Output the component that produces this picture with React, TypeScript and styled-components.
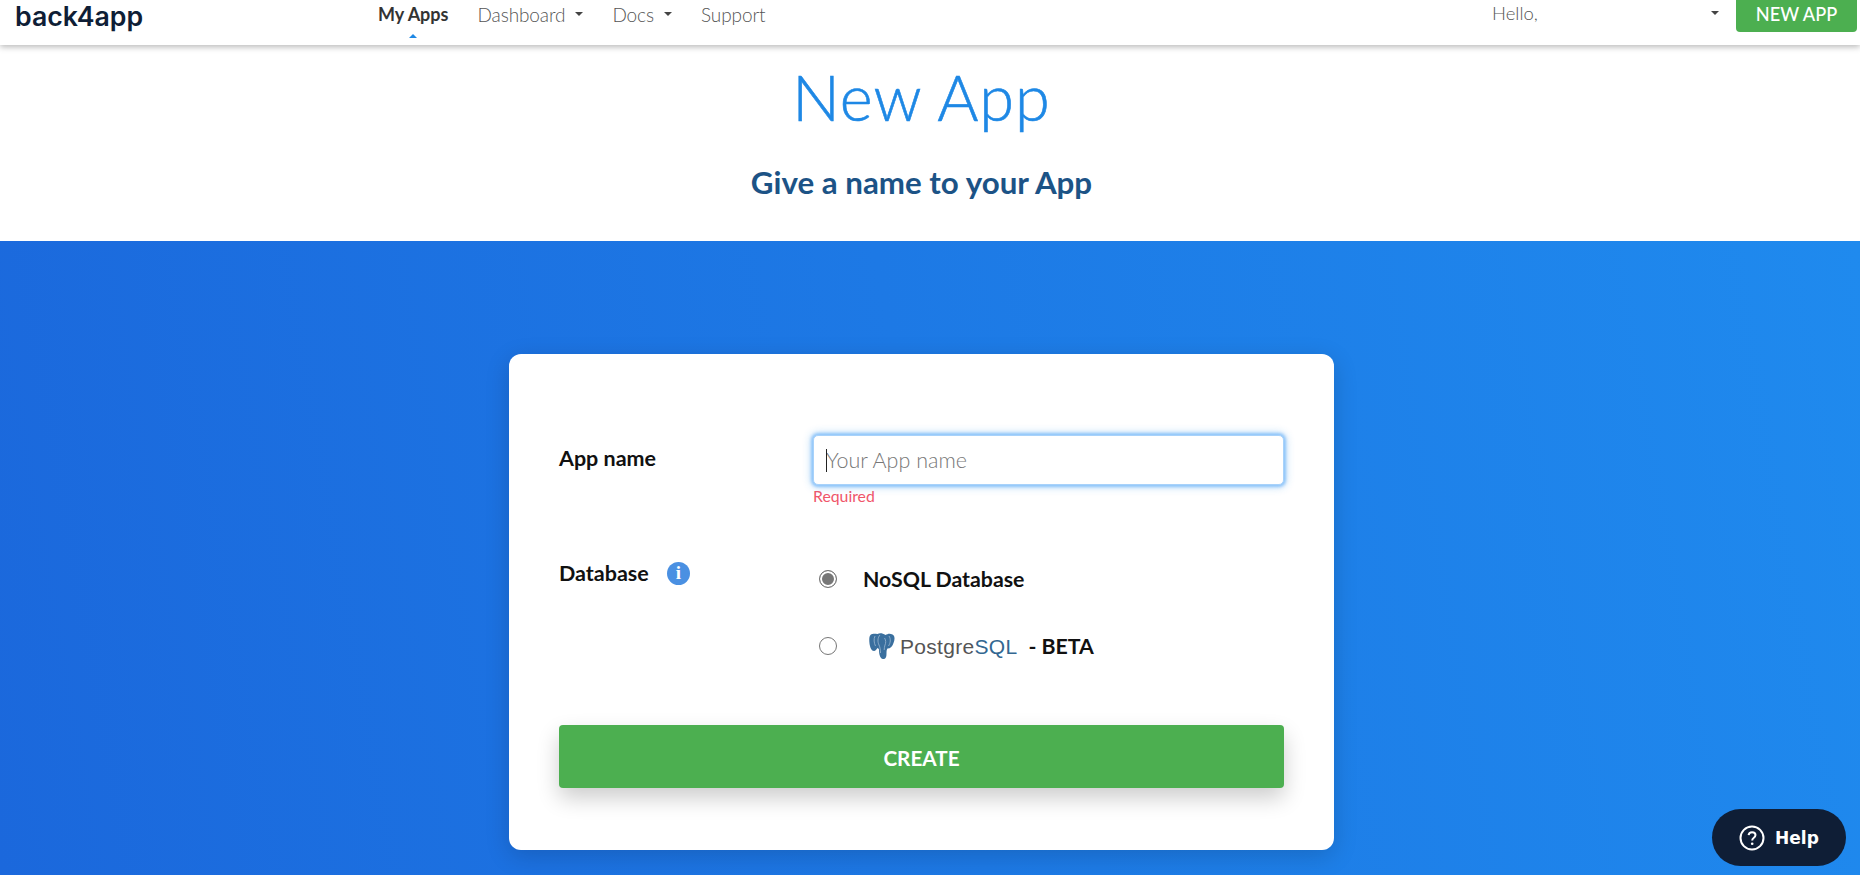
import React from 'react';
import styled, {createGlobalStyle} from "styled-components";

const GlobalStyle = createGlobalStyle`
    * {
        box-sizing: border-box;
    }
    html, body {
        margin: 0;
        height: 875px;
        overflow: hidden;
        background: #fff;
        font-family: "Lato", "Open Sans", sans-serif;
    }
`

const ElephantLogo = () => (
    <svg width="26" height="26" viewBox="0 0 26 26">
        <path fill="#3a6f9e" d="M3 1C0 2 0 6 .5 10.500c.5 4 2 7.500 4.500 7.500 1.500 0 2.500-1.500 3.500-3 1 .5 1.500 1 1.500 2 0 4 1 8.500 4 9 3 .5 3.500-2.500 3.500-5.500 0-2 0-4 1-5 3 0 5-2 6-5.500 1.500-4 1.500-7-1-8.500-3-1.500-5-.5-7 .5-3-2-6-2-8-1-2 0-3-.5-5 0z"/>
        <path fill="none" stroke="#9db9d2" strokeWidth=".8" d="M6 3c-1.500 3-1 7 .5 10M11 2c-2.500 2.500-2.500 7-1 10 1 2 1.500 5 1.500 8M20 3c2 3 1.500 7-.5 10M15.500 5c1.500 2 1.500 5 .5 7-.5 1.500-.8 3-.8 5"/>
    </svg>
)

const HelpIcon = () => (
    <svg width="26" height="26" viewBox="0 0 26 26" fill="none">
        <circle cx="13" cy="13" r="11.500" stroke="#fff" strokeWidth="2"/>
        <path d="M9.600 10.200c.2-1.900 1.600-3 3.500-3 2 0 3.400 1.200 3.400 2.900 0 1.400-.8 2.100-1.900 2.900-1 .7-1.400 1.200-1.400 2.400" stroke="#fff" strokeWidth="2"/>
        <circle cx="13.200" cy="18.700" r="1.300" fill="#fff"/>
    </svg>
)

const navLinks = [
    {label: "My Apps", active: true},
    {label: "Dashboard", caret: true},
    {label: "Docs", caret: true},
    {label: "Support"},
]

export default function App() {
    return (
        <Page>
            <GlobalStyle/>
            <Navbar>
                <Logo>back4app</Logo>
                <NavLinks>
                    {navLinks.map(link => (
                        <NavLink key={link.label} $active={link.active}>
                            {link.label}
                            {link.caret && <Caret/>}
                        </NavLink>
                    ))}
                </NavLinks>
                <UserMenu>
                    <Hello>Hello,</Hello>
                    <Caret/>
                </UserMenu>
                <NewAppButton>NEW APP</NewAppButton>
            </Navbar>
            <Header>
                <Title>New App</Title>
                <Subtitle>Give a name to your App</Subtitle>
            </Header>
            <BlueSection>
                <Card>
                    <NameRow>
                        <Label>App name</Label>
                        <Field>
                            <InputWrap>
                                <NameInput placeholder="Your App name"/>
                                <TextCursor/>
                            </InputWrap>
                            <ErrorText>Required</ErrorText>
                        </Field>
                    </NameRow>
                    <DatabaseRow>
                        <Label>
                            Database
                            <InfoBadge>i</InfoBadge>
                        </Label>
                        <RadioList>
                            <RadioRow>
                                <Radio type="radio" name="db" defaultChecked/>
                                <RadioText>NoSQL Database</RadioText>
                            </RadioRow>
                            <RadioRow>
                                <Radio type="radio" name="db"/>
                                <PostgresLogo>
                                    <ElephantLogo/>
                                    <PostgresName>Postgre<b>SQL</b></PostgresName>
                                </PostgresLogo>
                                <BetaText>- BETA</BetaText>
                            </RadioRow>
                        </RadioList>
                    </DatabaseRow>
                    <CreateButton>CREATE</CreateButton>
                </Card>
            </BlueSection>
            <HelpButton>
                <HelpIcon/>
                Help
            </HelpButton>
        </Page>
    );
}

const Page = styled.div`
    position: relative;
    width: 1860px;
    height: 875px;
    overflow: hidden;
`

const Navbar = styled.nav`
    position: relative;
    z-index: 2;
    display: flex;
    align-items: flex-start;
    height: 45px;
    padding-right: 3px;
    background: #fff;
    box-shadow: 0 2px 6px rgba(0, 0, 0, 0.28);
`

const Logo = styled.div`
    width: 378px;
    padding: 0 0 0 15px;
    font-family: "Inter", sans-serif;
    font-size: 26.700px;
    font-weight: 600;
    line-height: 32px;
    color: #0f1e36;
`

const NavLinks = styled.div`
    display: flex;
    gap: 29px;
    flex: 1;
`

const NavLink = styled.a<{ $active?: boolean }>`
    position: relative;
    display: flex;
    align-items: center;
    gap: 10px;
    height: 28px;
    font-size: ${p => p.$active ? "18px" : "19px"};
    font-weight: ${p => p.$active ? 700 : 300};
    letter-spacing: ${p => p.$active ? "0" : "-0.1px"};
    color: ${p => p.$active ? "#333" : "#555"};

    &::after {
        content: "";
        display: ${p => p.$active ? "block" : "none"};
        position: absolute;
        left: 50%;
        top: 34px;
        margin-left: -4px;
        border: 4px solid transparent;
        border-top: 0;
        border-bottom-color: #1e88e5;
    }
`

const Caret = styled.span`
    width: 0;
    height: 0;
    border: 4px solid transparent;
    border-bottom: 0;
    border-top-color: #444;
`

const UserMenu = styled.div`
    display: flex;
    align-items: center;
    justify-content: space-between;
    width: 227px;
    height: 25px;
    margin-right: 17px;
`

const Hello = styled.span`
    font-size: 18.500px;
    font-weight: 300;
    color: #555;
`

const NewAppButton = styled.button`
    width: 121px;
    height: 32px;
    padding: 0 0 5px;
    border: 0;
    border-radius: 0 0 4px 4px;
    background: #4caf50;
    color: #fff;
    font-family: inherit;
    font-size: 18.200px;
    font-weight: 500;
`

const Header = styled.header`
    display: flex;
    flex-direction: column;
    align-items: center;
    height: 196px;
    padding: 17px 17px 0 0;
    background: #fff;
`

const Title = styled.h1`
    margin: 0;
    font-size: 63px;
    font-weight: 300;
    line-height: 70px;
    letter-spacing: 1px;
    -webkit-text-stroke: 0.6px #1e88e5;
    color: #1e88e5;
`

const Subtitle = styled.h2`
    margin: 32px 0 0;
    font-size: 31.300px;
    font-weight: 700;
    line-height: 36px;
    color: #1c5386;
`

const BlueSection = styled.section`
    display: flex;
    justify-content: center;
    height: 634px;
    padding: 113px 17px 0 0;
    background: linear-gradient(80deg, #1b68dc, #1f8aee);
`

const Card = styled.div`
    width: 825px;
    height: 496px;
    padding: 81px 50px 0;
    border-radius: 12px;
    background: #fff;
    box-shadow: 0 6px 24px rgba(0, 0, 0, 0.16);
`

const NameRow = styled.div`
    display: grid;
    grid-template-columns: 254px 471px;
    height: 115px;
`

const DatabaseRow = styled(NameRow)`
    height: 175px;
`

const Label = styled.div`
    display: flex;
    align-items: center;
    gap: 18px;
    height: 46px;
    font-size: 21.500px;
    font-weight: 700;
    color: #111;
`

const Field = styled.div`
    display: flex;
    flex-direction: column;
`

const InputWrap = styled.div`
    position: relative;
`

const NameInput = styled.input`
    display: block;
    width: 100%;
    height: 50px;
    padding: 0 12px;
    border: 1px solid #a8d2fa;
    border-radius: 5px;
    outline: none;
    background: #fff;
    box-shadow: 0 0 3px 2px rgba(120, 185, 250, 0.75), 0 0 9px 2px rgba(30, 136, 229, 0.3);
    font-family: inherit;
    font-size: 21.500px;
    font-weight: 300;

    &::placeholder {
        color: #777;
        opacity: 1;
    }
`

const TextCursor = styled.span`
    position: absolute;
    left: 13px;
    top: 14px;
    width: 1px;
    height: 23px;
    background: #222;
`

const ErrorText = styled.span`
    margin-top: 2px;
    font-size: 15.800px;
    font-weight: 400;
    line-height: 18px;
    color: #f0566a;
`

const InfoBadge = styled.span`
    display: flex;
    align-items: center;
    justify-content: center;
    width: 23px;
    height: 23px;
    border-radius: 50%;
    background: #4a90e2;
    color: #fff;
    font-family: "Liberation Serif", serif;
    font-size: 19px;
    font-weight: 700;
`

const RadioList = styled.div`
    display: flex;
    flex-direction: column;
    gap: 37px;
    padding: 14px 0 0 6px;
`

const RadioRow = styled.label`
    display: flex;
    align-items: center;
    height: 30px;
`

const Radio = styled.input`
    appearance: none;
    flex: none;
    width: 18px;
    height: 18px;
    margin: 0 26px 0 0;
    border: 1.500px solid #767676;
    border-radius: 50%;
    background: #fff;

    &:checked {
        background: #777;
        box-shadow: inset 0 0 0 2px #fff;
    }
`

const RadioText = styled.span`
    font-size: 21.300px;
    font-weight: 700;
    color: #111;
`

const BetaText = styled(RadioText)`
    margin-left: 11px;
`

const PostgresLogo = styled.span`
    display: flex;
    align-items: center;
    gap: 5px;
    margin-left: 6px;
`

const PostgresName = styled.span`
    font-family: "Liberation Sans", sans-serif;
    font-size: 21px;
    line-height: 1;
    letter-spacing: 0.300px;
    color: #555;

    b {
        font-weight: 400;
        color: #336791;
    }
`

const CreateButton = styled.button`
    display: block;
    width: 100%;
    height: 63px;
    padding: 2px 0 0;
    border: 0;
    border-radius: 4px;
    background: #4caf50;
    box-shadow: 0 10px 22px rgba(0, 0, 0, 0.2);
    color: #fff;
    font-family: inherit;
    font-size: 20.700px;
    font-weight: 700;
`

const HelpButton = styled.button`
    position: absolute;
    left: 1712px;
    top: 809px;
    display: flex;
    align-items: center;
    justify-content: center;
    gap: 10px;
    width: 134px;
    height: 57px;
    padding: 0;
    border: 0;
    border-radius: 29px;
    background: #0f1e36;
    color: #fff;
    font-family: "DejaVu Sans", sans-serif;
    font-size: 17px;
    font-weight: 700;
`
